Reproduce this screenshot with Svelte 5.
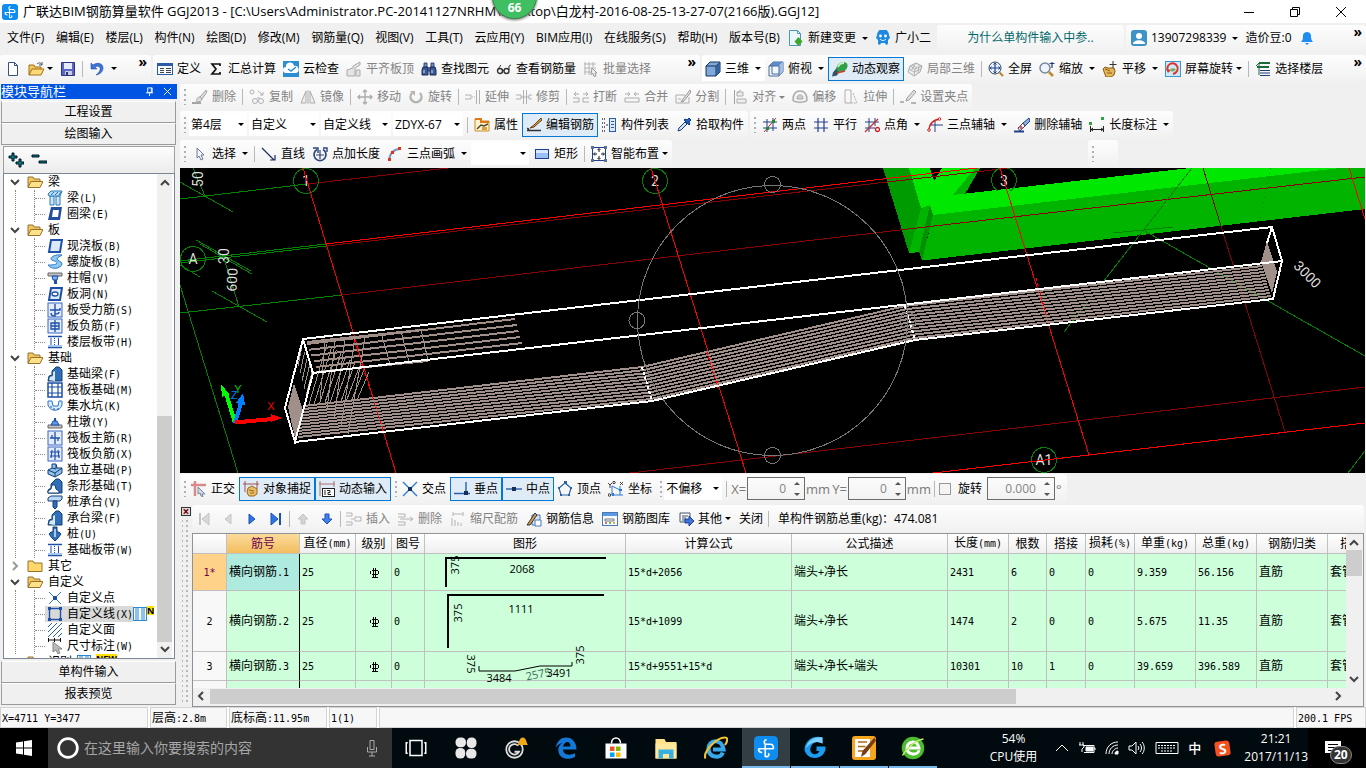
<script lang="ts">
  type Tool = {
    label?: string;
    icon?: string;
    off?: boolean;
    on?: boolean;
    caret?: '' | 'wide' | 'tight';
    kind?: 'tool' | 'sep' | 'grip' | 'combo' | 'view';
    size?: string;
  };

  const sep: Tool = { kind: 'sep' };
  const grip: Tool = { kind: 'grip' };

  const menus = ['文件(F)', '编辑(E)', '楼层(L)', '构件(N)', '绘图(D)', '修改(M)', '钢筋量(Q)', '视图(V)',
    '工具(T)', '云应用(Y)', 'BIM应用(I)', '在线服务(S)', '帮助(H)', '版本号(B)'];

  const fileTools: Tool[] = [
    { icon: 'new' },
    { icon: 'open', caret: 'tight' },
    { icon: 'save' },
    sep,
    { icon: 'undo', caret: 'wide' }
  ];

  const mainTools: Tool[] = [
    { icon: 'define', label: '定义' },
    { icon: 'sigma', label: '汇总计算' },
    { icon: 'cloud', label: '云检查' },
    { icon: 'level', label: '平齐板顶', off: true },
    { icon: 'binoculars', label: '查找图元' },
    { icon: 'glasses', label: '查看钢筋量' },
    { icon: 'batch', label: '批量选择', off: true }
  ];

  const viewTools: Tool[] = [
    { icon: 'cube', label: '三维', caret: 'wide', kind: 'view' },
    { icon: 'topview', label: '俯视', caret: 'wide' },
    { icon: 'orbit', label: '动态观察', on: true },
    { icon: 'part3d', label: '局部三维', off: true },
    sep,
    { icon: 'fullscreen', label: '全屏' },
    { icon: 'zoom', label: '缩放', caret: 'wide' },
    { icon: 'pan', label: '平移', caret: 'wide' },
    { icon: 'screenrot', label: '屏幕旋转', caret: 'tight' },
    sep,
    { icon: 'floors', label: '选择楼层' }
  ];

  const editTools: Tool[] = [
    grip,
    { icon: 'brush', label: '删除', off: true },
    sep,
    { icon: 'copy', label: '复制', off: true },
    { icon: 'mirror', label: '镜像', off: true },
    sep,
    { icon: 'move', label: '移动', off: true },
    { icon: 'rotate', label: '旋转', off: true },
    sep,
    { icon: 'extend', label: '延伸', off: true },
    { icon: 'trim', label: '修剪', off: true },
    sep,
    { icon: 'break', label: '打断', off: true },
    { icon: 'join', label: '合并', off: true },
    { icon: 'split', label: '分割', off: true },
    sep,
    { icon: 'align', label: '对齐', off: true, caret: 'tight' },
    { icon: 'offset', label: '偏移', off: true },
    { icon: 'stretch', label: '拉伸', off: true },
    sep,
    { icon: 'gripset', label: '设置夹点', off: true }
  ];

  const memberTools: Tool[] = [
    grip,
    { kind: 'combo', label: '第4层', size: 'short' },
    { kind: 'combo', label: '自定义' },
    { kind: 'combo', label: '自定义线' },
    { kind: 'combo', label: 'ZDYX-67' },
    sep,
    { icon: 'props', label: '属性' },
    { icon: 'editbar', label: '编辑钢筋', on: true },
    { icon: 'list', label: '构件列表' },
    { icon: 'pick', label: '拾取构件' }
  ];

  const axisTools: Tool[] = [
    grip,
    { icon: 'twopoint', label: '两点' },
    { icon: 'parallel', label: '平行' },
    { icon: 'angle', label: '点角', caret: 'wide' },
    { icon: 'threeaxis', label: '三点辅轴', caret: 'wide' },
    { icon: 'delaxis', label: '删除辅轴' },
    { icon: 'length', label: '长度标注', caret: 'wide' }
  ];

  const drawTools: Tool[] = [
    grip,
    { icon: 'pointer', label: '选择', caret: 'wide' },
    sep,
    { icon: 'line', label: '直线' },
    { icon: 'pointlen', label: '点加长度' },
    { icon: 'arc', label: '三点画弧', caret: 'wide' },
    { kind: 'combo', label: '', size: 'short' },
    { icon: 'rect', label: '矩形' },
    sep,
    { icon: 'smart', label: '智能布置', caret: 'tight' }
  ];

  const snapTools: Tool[] = [
    grip,
    { icon: 'ortho', label: '正交' },
    { icon: 'osnap', label: '对象捕捉', on: true },
    { icon: 'dyninput', label: '动态输入', on: true },
    grip,
    { icon: 'cross', label: '交点' },
    { icon: 'perp', label: '垂点', on: true },
    { icon: 'mid', label: '中点', on: true },
    { icon: 'vertex', label: '顶点' },
    { icon: 'coord', label: '坐标' },
    grip,
    { kind: 'combo', label: '不偏移', size: 'short' },
    sep
  ];

  const rebarTools: Tool[] = [
    { icon: 'first', off: true },
    { icon: 'prev', off: true },
    { icon: 'next' },
    { icon: 'last' },
    sep,
    { icon: 'up', off: true },
    { icon: 'down' },
    sep,
    { icon: 'insert', label: '插入', off: true },
    { icon: 'remove', label: '删除', off: true },
    { icon: 'scale', label: '缩尺配筋', off: true },
    { icon: 'info', label: '钢筋信息' },
    { icon: 'library', label: '钢筋图库' },
    { icon: 'other', label: '其他', caret: 'tight' },
    { label: '关闭' },
    sep
  ];

  const tree = [
    { label: '梁', open: true, items: [['beam', '梁(L)'], ['ring', '圈梁(E)']] },
    {
      label: '板', open: true, items: [['slab', '现浇板(B)'], ['spiral', '螺旋板(B)'], ['cap', '柱帽(V)'],
        ['hole', '板洞(N)'], ['force', '板受力筋(S)'], ['neg', '板负筋(F)'], ['strip', '楼层板带(H)']]
    },
    {
      label: '基础', open: true, items: [['fbeam', '基础梁(F)'], ['raft', '筏板基础(M)'], ['pit', '集水坑(K)'],
        ['pier', '柱墩(Y)'], ['raftmain', '筏板主筋(R)'], ['raftneg', '筏板负筋(X)'], ['isolated', '独立基础(P)'],
        ['stripf', '条形基础(T)'], ['pilecap', '桩承台(V)'], ['fbeam', '承台梁(F)'], ['pile', '桩(U)'], ['strip', '基础板带(W)']]
    },
    { label: '其它', open: false, items: [] },
    {
      label: '自定义', open: true, items: [['cpoint', '自定义点'], ['cline', '自定义线(X)'], ['cface', '自定义面'], ['dim', '尺寸标注(W)']]
    }
  ];

  const columns = ['', '筋号', '直径(mm)', '级别', '图号', '图形', '计算公式', '公式描述', '长度(mm)', '根数',
    '搭接', '损耗(%)', '单重(kg)', '总重(kg)', '钢筋归类', '搭接形式'];

  const rows = [
    { no: '1*', name: '横向钢筋.1', size: 'r1', formula: '15*d+2056', desc: '端头+净长', rest: ['2431', '6', '0', '0', '9.359', '56.156', '直筋', '套管挤压'] },
    { no: '2', name: '横向钢筋.2', size: 'r2', formula: '15*d+1099', desc: '端头+净长', rest: ['1474', '2', '0', '0', '5.675', '11.35', '直筋', '套管挤压'] },
    { no: '3', name: '横向钢筋.3', size: 'r3', formula: '15*d+9551+15*d', desc: '端头+净长+端头', rest: ['10301', '10', '1', '0', '39.659', '396.589', '直筋', '套管挤压'] }
  ];

  const status = ['X=4711 Y=3477', '层高:2.8m', '底标高:11.95m', '1(1)', '', '200.1 FPS'];

  const pinned = ['taskview', 'fan', 'gbell', 'edge', 'store', 'explorer', 'ie'];
  const running = ['ggj', 'gblue', 'note', 'green360'];

  // evenly spaced bars between a top edge and a bottom edge
  function bars(a: number[], b: number[], c: number[], d: number[], n: number) {
    return Array.from({ length: n }, (_, i) => {
      const t = i / (n - 1);
      return [a[0] + (c[0] - a[0]) * t, a[1] + (c[1] - a[1]) * t, b[0] + (d[0] - b[0]) * t, b[1] + (d[1] - b[1]) * t];
    });
  }

  const rebar = [
    ...bars([304, 406], [642, 367], [298, 437], [651, 399], 11),
    ...bars([642, 367], [905, 306], [651, 399], [914, 338], 11),
    ...bars([905, 306], [1262, 266], [914, 338], [1271, 296], 11),
    ...bars([307, 344], [515, 319], [316, 367], [522, 343], 5)
  ];
  const stirrups = [
    ...bars([327, 344], [309, 404], [369, 372], [357, 400], 10),
    ...bars([302, 346], [298, 366], [312, 372], [306, 396], 5),
    ...bars([325, 342], [320, 402], [365, 338], [348, 434], 5),
    ...bars([382, 336], [390, 364], [421, 330], [428, 360], 3)
  ];

  const blueBox = '<path d="M4 2h11l-2 12H2z" fill="#dce9fb" stroke="#1d4fa8" stroke-width="2"/>';
  const grid = '<rect x="1" y="1" width="14" height="14" fill="#e4ecfc" stroke="#3767c4"/>';

  const icons: Record<string, string> = {
    new: '<path d="M3.500 1.500h6l3 3v10h-9z" fill="#fff" stroke="#3a4f7c"/><path d="M9.500 1.500v3h3" fill="none" stroke="#3a4f7c"/>',
    open: '<path d="M1 14V4h5l1 2h6v3" fill="#f7c65b" stroke="#a0701a"/><path d="M1 14l3-6h12l-3 6z" fill="#ffd978" stroke="#a0701a"/><path d="M9 3c2-2 4-1 5 1M14 1v3h-3" fill="none" stroke="#456"/>',
    save: '<path d="M1.500 1.500h13v13h-13z" fill="#5a67c4" stroke="#2c3480"/><path d="M4 2h8v6H4z" fill="#e6ebff"/><path d="M5 10h7v4H5z" fill="#c9cde0"/><path d="M6 11h2v3H6z" fill="#2c3480"/>',
    undo: '<path d="M2 2v6h6L6 6c3-2 6 0 5 3-.5 2-2 3-4 5 5-1 7-4 7-7 0-5-6-6-10-3z" fill="#3f74d8" stroke="#2450a8" stroke-width=".6"/>',
    define: '<rect x=".5" y="2.500" width="15" height="11" fill="#f4f8ff" stroke="#2b5aa8"/><path d="M1 3h14v2H1z" fill="#2b5aa8"/><path d="M3 7.500h4M3 9.500h4M3 11.500h4M9 7.500h5M9 9.500h5M9 11.500h5" stroke="#444"/>',
    sigma: '<path d="M12 5V3H4l4 5-4 5h8v-2" fill="none" stroke="#111" stroke-width="1.700"/>',
    cloud: '<rect width="16" height="16" fill="#2b8ed0"/><path d="M3 12a3 3 0 0 1 0-6 4 4 0 0 1 8-1 3.500 3.500 0 0 1 2 7z" fill="#fff"/><path d="M5 8l3 2 5-4" fill="none" stroke="#2b8ed0" stroke-width="1.500"/>',
    level: '<path d="M1 15V9l6-2V5l7-4v3L9 7v8zM10 15V9h4v6z" fill="#e4e4e4" stroke="#aaa"/>',
    binoculars: '<path d="M2 6h5v8H1V9zM9 6h5l1 3v5H9z" fill="#3b5998" stroke="#1c2c55"/><path d="M3 2h3v4H3zM10 2h3v4h-3zM7 7h2v3H7z" fill="#6f8fc9" stroke="#1c2c55" stroke-width=".8"/><path d="M3 9v3M11 9v3" stroke="#cfe0ff"/>',
    glasses: '<circle cx="4" cy="10" r="2.500" fill="none" stroke="#333" stroke-width="1.400"/><circle cx="10.500" cy="10" r="2.500" fill="none" stroke="#333" stroke-width="1.400"/><path d="M2 8l3-4M13 9V5l2-1M6.500 9.500h1.500" fill="none" stroke="#333"/>',
    batch: '<path d="M1 3h12M1 7h12M1 11h7M2 1v13M6 1v13M10 1v5" stroke="#b4b4b4"/><path d="M9 7l5 5h-2l1 3-2 .5-1-3-2 1z" fill="#eee" stroke="#999"/>',
    cube: '<path d="M1 5l4-4h10v10l-4 4H1z" fill="#7ea9d8" stroke="#14305c"/><path d="M1 5h10v10M11 5l4-4" fill="none" stroke="#14305c"/><path d="M11 5l4-4v10l-4 4z" fill="#35619c"/>',
    topview: '<path d="M1 5l4-4h10v10l-4 4H1z" fill="#f2f7fd" stroke="#486a98"/><path d="M1 5l4-4h10l-4 4z" fill="#5e8cc8"/><path d="M11 5l4-4v10l-4 4z" fill="#9fbfe4"/><path d="M1 5h10v10M4 5v8h7" fill="none" stroke="#486a98"/>',
    orbit: '<path d="M0 15.500l5-1 3-5-3-3-4 5z" fill="#2f5668"/><ellipse cx="10" cy="6" rx="6" ry="4.500" transform="rotate(-35 10 6)" fill="#2fa047"/><path d="M6 6c1-3 4-4 6-4" fill="none" stroke="#c9f3c0" stroke-width="2"/><path d="M5 12l8-2" stroke="#d04030" stroke-width="1.500"/>',
    part3d: '<path d="M1 11l2-6 6-3 6 3-2 6-6 4z" fill="#ececec" stroke="#aaa"/><path d="M3 5l5 3 7-3M8 8l-1 7M5 4l5 3M9 2l-5 8M12 4l-1 8M2 8l5 3 7-3" fill="none" stroke="#aaa" stroke-width=".8"/>',
    fullscreen: '<circle cx="7" cy="7" r="6" fill="#eaf2ff" stroke="#345"/><path d="M11.500 11.500L15 15" stroke="#b3842c" stroke-width="2"/><path d="M7 2v10M2 7h10" stroke="#1a3f95" stroke-width="1.200"/><path d="M5.500 3.500L7 2l1.500 1.500M5.500 10.500L7 12l1.500-1.500M3.500 5.500L2 7l1.500 1.500M10.500 5.500L12 7l-1.500 1.500" fill="none" stroke="#1a3f95"/>',
    zoom: '<circle cx="6" cy="7" r="5" fill="#eef4fb" stroke="#7a8a98" stroke-width="1.500"/><path d="M10 11l4 4" stroke="#c08a30" stroke-width="2.500"/><path d="M13 1v6M10.500 2.500h5" stroke="#223a80" stroke-width="1.200"/>',
    pan: '<path d="M1 8l2-2 3 1 6 0 1 3-1 4-3 2H4z" fill="#e5b65a" stroke="#8a5a14"/><path d="M3 8l3 1M6 9l2 1M5 12h5" stroke="#8a5a14"/><path d="M11 0v7M7.500 3.500h7" stroke="#333"/>',
    screenrot: '<rect x=".5" y=".5" width="15" height="15" fill="#cdeaf8" stroke="#3c98c8"/><path d="M3 10a5 5 0 0 1 9-5c2 3 0 7-4 8" fill="none" stroke="#e03434" stroke-width="2"/><path d="M1 8l2 4 3-3z" fill="#e03434"/><path d="M5 8l4-1 2 2-4 2z" fill="#6fb45a"/>',
    floors: '<path d="M4 2h11M2 6h12" stroke="#1b6a3c" stroke-width="2"/><path d="M5 9.500h10M5 12h10M5 14.500h10" stroke="#223a80" stroke-width="1.200"/><path d="M1 5l3-3v12" fill="none" stroke="#1b6a3c"/>',
    brush: '<path d="M14 1L8 8l2 2 5-7zM8 8c-3 0-4 3-3 5 2 0 5-1 5-3z" fill="#ddd" stroke="#a4a4a4"/><path d="M0 14h9" stroke="#a4a4a4" stroke-width="2"/>',
    copy: '<circle cx="3" cy="3" r="2" fill="none" stroke="#b0b0b0"/><circle cx="6" cy="12" r="2.500" fill="none" stroke="#b0b0b0"/><circle cx="12" cy="12" r="2.500" fill="none" stroke="#b0b0b0"/><path d="M9 2l5 4M14 3v3h-3M8 9h3" fill="none" stroke="#b0b0b0"/>',
    mirror: '<path d="M6 2v12H1zM10 2v12h5z" fill="#eee" stroke="#acacac"/><path d="M8 1v14" stroke="#acacac"/>',
    move: '<path d="M8 1v14M1 8h14M6 3l2-2 2 2M6 13l2 2 2-2M3 6L1 8l2 2M13 6l2 2-2 2" fill="none" stroke="#acacac" stroke-width="1.400"/>',
    rotate: '<path d="M4 4a5.500 5.500 0 1 0 8 0" fill="none" stroke="#b4b4b4" stroke-width="2.500"/><path d="M2 2h5v5z" fill="#b4b4b4"/>',
    extend: '<path d="M0 6h6v4H0M11.500 1v14M14.500 1v14" fill="none" stroke="#b0b0b0"/><path d="M7 8h4" stroke="#b0b0b0" stroke-dasharray="1 1"/>',
    trim: '<path d="M0 6h5v4H0M16 6h-3v4h3M7.500 1v14M10.500 1v14M5 8h8" fill="none" stroke="#b0b0b0"/>',
    break: '<path d="M0 9h6v4H0M16 9h-6v4h6M1 5h5M10 5h5M3 3L1 5l2 2M13 3l2 2-2 2" fill="none" stroke="#acacac"/>',
    join: '<path d="M1 9h14v4H1zM1 5h5M10 5h5M4 3l2 2-2 2M12 3l-2 2 2 2" fill="none" stroke="#acacac"/>',
    split: '<path d="M1 6h9M1 14h13M1 6v8M14 8v6M3 10h3" fill="none" stroke="#acacac"/><path d="M15 1L8 10l-2 3 3-1 7-9z" fill="#ddd" stroke="#999"/>',
    align: '<path d="M2.500 1v14" stroke="#a0a0a0"/><path d="M5 3h6v4H5zM5 10h9v4H5z" fill="#eee" stroke="#acacac"/><path d="M9 1L5 4" stroke="#acacac"/>',
    offset: '<path d="M1 11c0-6 3-9 7-9s7 3 7 9c-1 3-13 3-14 0z" fill="#f2f2f2" stroke="#acacac" stroke-width="1.500"/><path d="M5 10c0-3 1-4 3-4s3 1 3 4z" fill="#ccc" stroke="#acacac"/>',
    stretch: '<path d="M2 1h6v13H2z" fill="none" stroke="#b0b0b0"/><path d="M10 4l4 10H8" fill="none" stroke="#b0b0b0" stroke-dasharray="2 1"/>',
    gripset: '<path d="M14 1L7 9l-1 3 3-1 7-8z" fill="#ddd" stroke="#a0a0a0"/><path d="M0 13h4M11 14h5" stroke="#a0a0a0" stroke-width="1.500"/>',
    props: '<path d="M1 2h6v2h8v10H1z" fill="#fff3cf" stroke="#c88a28"/><path d="M1 2h6v3h8" fill="none" stroke="#e07818" stroke-width="2"/><path d="M3 12l4-4 3 1 4-2" fill="none" stroke="#4a4a30" stroke-width="1.500"/><path d="M8 10h5v3H8z" fill="#d9a040"/>',
    editbar: '<path d="M1 11.500c2 0 3 2 0 2h14" fill="none" stroke="#333" stroke-width="1.300"/><path d="M15 1L8 8l-4 3 4-1 8-7z" fill="#d59a4a" stroke="#6a3c18"/>',
    list: '<path d="M1 2h3M1 6h3M1 10h3M1 14h3" stroke="#335" stroke-width="1.500" stroke-dasharray="1 1"/><rect x="8.500" y="1.500" width="6" height="13" fill="#dce8fb" stroke="#2b5aa8"/><path d="M10 4.500h3M10 7.500h3M10 10.500h3" stroke="#2b5aa8"/><path d="M5 8h2" stroke="#335"/>',
    pick: '<path d="M2 14l1-3 6-6 2 2-6 6z" fill="#cfe1f8" stroke="#1d3c78"/><path d="M8 3l5 5 1-1-1-2 2-2-2-2-2 2-2-1z" fill="#1d62c8" stroke="#12357c"/>',
    twopoint: '<path d="M5 2v13M11 1v13M1 5h14M1 11h14" stroke="#24408c"/><path d="M2 15L14 1" stroke="#c03030"/><path d="M4 10h3v3H4zM10 3h3v3h-3z" fill="#228a22"/>',
    parallel: '<path d="M5 1v14M11 1v14M1 5h14M1 11h14" stroke="#24408c" stroke-width="1.200"/>',
    angle: '<path d="M5 1v14M11 1v8M1 5h14M1 11h10" stroke="#24408c"/><path d="M1 15L14 2" stroke="#c03030" stroke-width="1.300"/><circle cx="13.500" cy="12.500" r="2" fill="none" stroke="#d02020" stroke-width="1.300"/>',
    threeaxis: '<path d="M8 4v11M4 8h12" stroke="#24408c"/><path d="M2 14C2 7 5 3 13 2" fill="none" stroke="#d02020" stroke-width="1.300"/><circle cx="2" cy="13" r="1.300" fill="#fff" stroke="#d02020"/><circle cx="12.500" cy="2" r="1.300" fill="#fff" stroke="#d02020"/>',
    delaxis: '<path d="M15 1L9 6l2 3 5-5z" fill="#88b0e0" stroke="#24408c"/><path d="M9 6l-5 5 2 3 5-5z" fill="#fff" stroke="#444"/><path d="M5 10l2 3 2-2-2-3z" fill="#c25a7a"/><path d="M0 14.500h10" stroke="#24408c" stroke-width="2"/>',
    length: '<path d="M1.500 9v6M14.500 9v6M2 12.500h12M4 11l-2 1.500L4 14M12 11l2 1.500-2 1.500" fill="none" stroke="#222"/><path d="M0 5h3v3H0zM12 0h3v3h-3z" fill="#30a040"/>',
    pointer: '<path d="M5 2v10l2-2 2 4 2-1-2-4h3z" fill="#f4f6fa" stroke="#6a7a94"/>',
    line: '<path d="M1 2l12 12M14 9v5H9" fill="none" stroke="#1c2c5c" stroke-width="1.200"/>',
    pointlen: '<path d="M5 3.500A6 6 0 1 0 11 3.500" fill="none" stroke="#2a4478" stroke-width="1.700"/><path d="M8 4v9M4 9h8" stroke="#2a4478" stroke-width="1.200"/><path d="M1 2h5v5M15 6V2h-4" fill="none" stroke="#2a4478" stroke-width="1.400"/>',
    arc: '<path d="M2 14C3 8 6 3 13 3" fill="none" stroke="#7c94c0" stroke-width="2"/><path d="M1 12h3v3H1zM4 5h3v3H4zM11 1h3v3h-3z" fill="#d83820"/>',
    rect: '<rect x="1.500" y="3.500" width="13" height="9" fill="#9dc0fa" stroke="#1a3f95"/><path d="M2 4h12v3H2z" fill="#dae8ff"/>',
    smart: '<rect x="1.500" y="1.500" width="13" height="13" fill="#fff" stroke="#1a3f95"/><path d="M8 3v3M8 10v3M3 8h3M10 8h3M6.500 4L8 2.500 9.500 4M6.500 12L8 13.500 9.500 12M4 6.500L2.500 8 4 9.500M12 6.500L13.500 8 12 9.500" fill="none" stroke="#111"/><path d="M0 0h3v3H0zM13 0h3v3h-3zM0 13h3v3H0zM13 13h3v3h-3z" fill="#607090"/>',
    ortho: '<path d="M4 0v15M0 4h15" stroke="#d88a8a" stroke-width="2.500"/><path d="M7 6l7 7-3 0 1 3-2-1-1-3-2 1z" fill="#cfd8e6" stroke="#7a8aa4"/>',
    osnap: '<path d="M2 0v11M14 0v8M0 3h16" stroke="#a05050"/><path d="M5 7l4-2 5 3v5l-3 2H6l-2-3z" fill="#e8bd68" stroke="#9a6a20"/><path d="M6 9l5 1M7 12h4" stroke="#9a6a20"/>',
    dyninput: '<path d="M0 3h16M1 0v15M15 0v6" stroke="#b07070"/><rect x="3.500" y="7.500" width="12" height="8" fill="#fff" stroke="#222"/><path d="M6 9v5M8 9.500h3v2H9v2h3" fill="none" stroke="#222"/>',
    cross: '<path d="M1 1l14 14M15 1L1 15" stroke="#2a78d0" stroke-width="1.300"/><path d="M6 6h4v4H6z" fill="#14305c"/>',
    perp: '<path d="M12 1v11M0 12.500h16" stroke="#2a60a8" stroke-width="1.400"/><path d="M10 10h4v4h-4z" fill="#14305c"/>',
    mid: '<path d="M0 8h16" stroke="#2a60a8" stroke-width="1.400"/><path d="M6 6h4v4H6z" fill="#14305c"/>',
    vertex: '<path d="M8 2l6 5-2 7H4L2 7z" fill="none" stroke="#2a60a8" stroke-width="1.200"/><path d="M7 0h3v3H7zM13 6h2v2h-2zM1 6h2v2H1zM3 13h2v2H3zM11 13h2v2h-2z" fill="#2a60a8"/>',
    coord: '<path d="M4 5v9h11M4 5l8 4M12 5v9" fill="none" stroke="#2a78d0"/><path d="M0 2l2 2 2-2M2 4v3M12 1l3 3M15 1l-3 3" fill="none" stroke="#333" stroke-width=".9"/><circle cx="1.500" cy="14" r="1.300" fill="none" stroke="#333"/><circle cx="6" cy="1.500" r="1.200" fill="none" stroke="#333"/><path d="M4 12h2v3H4zM11 8h3v2h-3z" fill="#2a78d0"/>',
    first: '<path d="M4 2v12" stroke="#c4c4c4" stroke-width="2"/><path d="M13 2v12L6 8z" fill="#d8d8d8" stroke="#c4c4c4"/>',
    prev: '<path d="M11 3v10L5 8z" fill="#d8d8d8" stroke="#c4c4c4"/>',
    next: '<path d="M5 3v10l6-5z" fill="#2f74e4" stroke="#1c50b8"/>',
    last: '<path d="M3 2v12l7-6z" fill="#2f74e4" stroke="#1c50b8"/><path d="M12 2v12" stroke="#1c50b8" stroke-width="2"/>',
    up: '<path d="M8 3l5 5h-3v5H6V8H3z" fill="#d4d4d4" stroke="#c4c4c4"/>',
    down: '<path d="M8 13l5-5h-3V3H6v5H3z" fill="#3f80ea" stroke="#1c50b8"/>',
    insert: '<path d="M0 2h6v3H0M0 11h6v3H0M9 6h6v4H9zM5 8h3" fill="none" stroke="#b4b4b4"/>',
    remove: '<path d="M0 3h7v3H0M0 11h7v3H0M2 8h12M12 6l3 2-3 2" fill="none" stroke="#b4b4b4"/>',
    scale: '<path d="M3 1v4M13 1v4M3 3h10M2 7v8M5 9v6M8 11v4M11 12v3" fill="none" stroke="#b4b4b4"/>',
    info: '<path d="M6 4h8v10H6z" fill="#d8e6fa" stroke="#4a78b8"/><path d="M1 14h3L11 4 9 2z" fill="#d0a050" stroke="#333"/><path d="M9 9h6v6H9z" fill="#fff" stroke="#4a78b8"/>',
    library: '<rect x=".5" y="1.500" width="15" height="13" fill="#f7faff" stroke="#4a78b8"/><path d="M1 3.500h14" stroke="#5a98e0" stroke-width="3"/><path d="M3 8h9v2H3z" fill="none" stroke="#555" stroke-width=".8"/><path d="M3 12h2" stroke="#d33" stroke-width="1.500"/><path d="M7 12h2" stroke="#3a3" stroke-width="1.500"/><path d="M11 12h2" stroke="#e90" stroke-width="1.500"/>',
    other: '<path d="M2 2h10v5M2 2v9h5M4 5h6M4 7h4M4 9h3" fill="none" stroke="#456"/><path d="M7 8h4V5l5 5-5 5v-3H7z" fill="#3f74d8" stroke="#1c3f98"/>',
    newdoc: '<path d="M1.500 .5h8l3 3v12h-11z" fill="#eaf6fb" stroke="#4a98b8"/><path d="M9.500 .5v3h3" fill="none" stroke="#4a98b8"/><path d="M10.500 7l4 4.500-4 4.500-4-4.500z" fill="#3aa82a"/>',
    mascot: '<path d="M2 5a6 6 0 0 1 12 0l1 3-2 2v4l-2 1-1-2H6l-1 2-2-1v-4L1 8z" fill="#1d8ae0"/><circle cx="5.500" cy="6" r="1.400" fill="#fff"/><circle cx="10.500" cy="6" r="1.400" fill="#fff"/><path d="M5 9c2 2 4 2 6 0" fill="none" stroke="#fff"/>',
    user: '<rect width="16" height="16" rx="3" fill="#3d92c8"/><circle cx="8" cy="6" r="3" fill="#fff"/><path d="M2 14c0-5 12-5 12 0z" fill="#fff"/>',
    bell: '<path d="M2 12c2-2 2-4 2-7 1-4 7-4 8 0 0 3 0 5 2 7z" fill="#1e8cf0"/><path d="M6 13h4l-2 2z" fill="#1e8cf0"/>',
    // navigation tree
    folderopen: '<path d="M1 13V3h5l1 2h6v3" fill="#f1c75c" stroke="#93722c"/><path d="M1 13.500l3-6h12l-3 6z" fill="#ffe08a" stroke="#93722c"/>',
    folder: '<path d="M1 13.500V3h5l1 2h8v8.500z" fill="#ffd76a" stroke="#93722c"/>',
    beam: '<path d="M3 6h4v9H3zM9 6h4v9H9z" fill="#cfe6fa" stroke="#2a78b8"/><path d="M1 4l3-3h11l-2 5H2z" fill="#b4dcf8" stroke="#2a78b8"/><path d="M4 5l3-3M8 5l3-3M12 5l2-3" stroke="#2a78b8"/>',
    ring: '<path d="M4 1h11l-2 13H1z" fill="#244f9e"/><path d="M6 4h6l-1 7H5z" fill="#fff"/>',
    slab: blueBox,
    spiral: '<path d="M15 1C8 0 4 3 4 5s7 2 6 4-6 2-9 2c3 5 13 4 14-1 0-3-5-3-5-5s3-2 5-4z" fill="#8cc8f4" stroke="#2a78c8"/>',
    cap: '<path d="M1 3h14v3H1z" fill="#c4c4c4" stroke="#666"/><path d="M5 6h6l-1 4H6z" fill="#7ab0f0" stroke="#1d4fa8"/><path d="M7 10h3v4H7z" fill="#1d4fa8"/>',
    hole: blueBox + '<ellipse cx="8" cy="8" rx="3" ry="2" fill="#fff" stroke="#1d4fa8" stroke-width="1.300"/>',
    force: grid + '<path d="M8 2v12c-3 0-4-1-4-3M3 8h10V6M8 12c3 0 4-1 4-2" fill="none" stroke="#1d4fa8" stroke-width="1.400"/>',
    neg: grid + '<path d="M8 2v12M4 5v6h8V5zM4 8h8" fill="none" stroke="#1d4fa8" stroke-width="1.300"/>',
    strip: '<path d="M1 2.500h14M1 13.500h14" stroke="#1d4fa8" stroke-width="1.500"/><path d="M4 4v9M11.500 4v9" stroke="#1d4fa8"/><path d="M1 11h14v2H1z" fill="#a8c6f4"/><path d="M7.500 4v8" stroke="#1d4fa8" stroke-dasharray="1 1"/>',
    fbeam: '<path d="M1 15l1-5 3-1V5l4-4h3l3 3v11z" fill="#2e6fb8" stroke="#123f78"/><path d="M2 14l1-3 3-1V6l2-1v10z" fill="#d8eafa"/>',
    raft: '<rect x="1" y="1" width="14" height="14" fill="#fff" stroke="#1d4fa8" stroke-width="1.500"/><path d="M1 5h14M1 11h14M5 1v14M11 1v14" stroke="#1d4fa8" stroke-width="1.200"/>',
    pit: '<path d="M1 3h4l1 5h5l1-5h3v4c-2 7-12 7-14 0z" fill="#dcebfb" stroke="#2a78c8"/><path d="M3 9h2M6 11h2M10 11h2" stroke="#1d4fa8"/>',
    pier: '<path d="M1 11h14v3H1z" fill="#c4c4c4" stroke="#666"/><path d="M4 11l2-4h4l2 4z" fill="#5a9ae8" stroke="#1d4fa8"/><path d="M7 4h2v3H7z" fill="#1d4fa8"/>',
    raftmain: grid + '<path d="M8 2v12M3 8h10M5 8V5M11 8v3" fill="none" stroke="#1d4fa8" stroke-width="1.300"/>',
    raftneg: grid + '<path d="M8 2v12M3 6h10M3 10h10M5 4l-1 8M11 4l1 8" fill="none" stroke="#1d4fa8" stroke-width="1.200"/>',
    isolated: '<path d="M1 8l4-2V2h4l1 4h5v5l-7 4-7-3z" fill="#8fbfea" stroke="#123f78"/><path d="M1 8l7 3 7-5M8 11v4M5 6l4 1V3" fill="none" stroke="#123f78"/>',
    stripf: '<path d="M1 15v-3l3-2V6l5-5h3l3 3v11z" fill="#2e6fb8" stroke="#123f78"/><path d="M1 15v-2l3-2 1-4h3l1 4 3 2v2z" fill="#fff" stroke="#123f78"/>',
    pilecap: '<path d="M1 4l3-2h11v3l-2 2H1z" fill="#bcd8f4" stroke="#123f78"/><path d="M6 7h4v6l-2 2-2-2z" fill="#2e6fb8" stroke="#123f78"/>',
    pile: '<path d="M6 1h4v5h2l2 2-3 4-3 3-3-3-3-4 2-2h2z" fill="#2e6fb8" stroke="#123f78"/><path d="M8 3v8" stroke="#cfe4fa" stroke-width="1.500"/>',
    cpoint: '<path d="M2 2l12 12M14 2L2 14" stroke="#2a78d0"/><path d="M6 6h4v4H6z" fill="#1d4fa8"/>',
    cline: '<rect x="2.500" y="2.500" width="11" height="11" fill="none" stroke="#1d4fa8" stroke-width="1.400"/><path d="M1 1h3v3H1zM12 1h3v3h-3zM1 12h3v3H1zM12 12h3v3h-3z" fill="#1d4fa8"/>',
    cface: '<path d="M1 5l4-4M1 10l9-9M1 15L15 1M6 15l9-9M11 15l4-4" stroke="#2a60b8"/>',
    dim: '<path d="M1.500 0v4M13.500 0v4M2 2h11M7.500 0v4" stroke="#111"/><path d="M6 4v10l3-2 2 4 2-1-2-4h4z" fill="#bbb" stroke="#888"/>',
    // taskbar
    taskview: '<path d="M4 3h8v10H4z" fill="none" stroke="#fff"/><path d="M2.500 4.500h-1v7h1M13.500 4.500h1v7h-1" fill="none" stroke="#fff"/>',
    fan: '<g fill="#e8e8e8"><rect x="1" y="1" width="7" height="6.500" rx="3"/><rect x="8.500" y="1" width="6.500" height="7" rx="3"/><rect x="8" y="8.500" width="7" height="6.500" rx="3"/><rect x="1" y="8" width="6.500" height="7" rx="3"/></g>',
    gbell: '<circle cx="7" cy="9" r="5.500" fill="none" stroke="#ddd" stroke-width="1.200"/><path d="M9.500 6.500a3.500 3.500 0 1 0 .5 4H7" fill="none" stroke="#ddd" stroke-width="1.200"/><path d="M9 6c1-1 1-5 3.500-5S15 5 16 6z" fill="#f0a818"/>',
    edge: '<path d="M1 8C2 3 5 1 8 1c4 0 7 3 7 8H6c0 4 5 4 8 2.500V14c-6 3-12 0-11-6 .5-2 2-3 3-3.500C4 5 2 6 1 8zm5-1h5c0-4-4-4-5 0z" fill="#1478d8"/>',
    store: '<path d="M1 5h14v10H1z" fill="#fff"/><path d="M5 5c0-5 6-5 6 0" fill="none" stroke="#fff"/><path d="M4 7h3v3H4z" fill="#f25022"/><path d="M8 7h3v3H8z" fill="#7fba00"/><path d="M4 11h3v3H4z" fill="#00a4ef"/><path d="M8 11h3v3H8z" fill="#ffb900"/>',
    explorer: '<path d="M1 2h6l1 2h7v11H1z" fill="#ffe08a"/><path d="M1 5h14v10H1z" fill="#ffe79c"/><path d="M3 9h10v6h-3v-3H6v3H3z" fill="#39aee0"/>',
    ie: '<path d="M12.500 11c-1 4-9.500 4-9.500-2.500s9-7 10 .5H6" fill="none" stroke="#39a8ea" stroke-width="2.800"/><path d="M1 15C-1 11 8 1 14 1c2 0 2 2 0 5" fill="none" stroke="#f2c32c" stroke-width="1.400"/>',
    ggj: '<rect width="16" height="16" rx="3" fill="#0d8df0"/><path d="M8.500 2.500c-2 0-2 2-1 3v8c2 1 3-1 2-2M3 8.500h10M3 8.500c0 2 1 2.500 2.500 2.500M7.500 5.500H11c1.500 0 2 1 2 3" fill="none" stroke="#fff" stroke-width="1.100"/>',
    gblue: '<path d="M13 1C6-1 1 4 1 9c1 7 12 8 14 0V7H9v3h2c-2 4-7 2-6-2s5-5 8-3z" fill="#1b9cf0"/><path d="M13 1C8 0 3 3 2 8c3-4 7-5 11-3z" fill="#7fd0ff"/>',
    note: '<rect width="16" height="16" rx="2" fill="#f5a61c"/><path d="M2 2h10v12H2z" fill="#fff"/><path d="M4 4h6M4 7h5M4 10h4" stroke="#b06a10"/><path d="M15 1L7 10l-1 4 3-2 7-9z" fill="#7a3c10"/>',
    green360: '<circle cx="8" cy="8" r="7.500" fill="#4dbb2e"/><path d="M12 9.500c-1 4-8 3-8-1.500s7-6 8 0H5" fill="none" stroke="#fff" stroke-width="2"/><path d="M1 13C3 9 9 3 15 2" fill="none" stroke="#b8ef6a"/>'
  };

  let selected = $state('cline');
  let query = $state('');
  let rotateOn = $state(false);
</script>

{#snippet icon(name: string)}
  <svg class="icon" viewBox="0 0 16 16" aria-hidden="true">{@html icons[name]}</svg>
{/snippet}

<!-- CJK at full size, ASCII runs in a half-width face -->
{#snippet mixed(text: string)}
  {#each text.split(/([\x20-\x7e]+)/) as run, i}{#if i % 2}<span class="half">{run}</span>{:else}{run}{/if}{/each}
{/snippet}

{#snippet tools(items: Tool[])}
  {#each items as t}
    {#if t.kind === 'sep'}
      <span class="sep"></span>
    {:else if t.kind === 'grip'}
      <span class="grip"></span>
    {:else if t.kind === 'combo'}
      <span class="combo {t.size ?? ''}">
        <select aria-label={t.label || '参数'}><option>{t.label}</option></select>
      </span>
    {:else}
      <button class="tool" class:on={t.on} class:view={t.kind === 'view'} disabled={t.off} aria-label={t.label ?? t.icon}>
        {#if t.icon}{@render icon(t.icon)}{/if}
        {#if t.label}<span>{t.label}</span>{/if}
        {#if t.caret}<i class="caret {t.caret}"></i>{/if}
      </button>
    {/if}
  {/each}
{/snippet}

{#snippet spin(id: string, value: string)}
  <span class="spin" class:wide={id === 'rot'}>
    <input {id} type="text" {value} disabled aria-label={id} />
    <span class="steps"><i class="caret flip"></i><i class="caret"></i></span>
  </span>
{/snippet}

{#snippet chevron(dir: string)}
  <svg class="chev {dir}" viewBox="0 0 10 10" aria-hidden="true"><path d="M1 7l4-4 4 4" /></svg>
{/snippet}

<div class="app">
  <header class="titlebar">
    {@render icon('ggj')}
    <h1>广联达BIM钢筋算量软件 GGJ2013 - [C:\Users\Administrator.PC-20141127NRHM\Desktop\白龙村-2016-08-25-13-27-07(2166版).GGJ12]</h1>
    <span class="speed">66</span>
    <div class="window">
      <button aria-label="最小化"><svg viewBox="0 0 12 12"><path d="M1 6.500h10" /></svg></button>
      <button aria-label="还原"><svg viewBox="0 0 12 12"><path d="M1.500 3.500h7v7h-7zM3.500 3V1.500h7v7H9" /></svg></button>
      <button aria-label="关闭窗口"><svg viewBox="0 0 12 12"><path d="M1 1l10 10M11 1L1 11" /></svg></button>
    </div>
  </header>

  <nav class="menubar">
    <div class="menus">
      <div class="menulist">
        {#each menus as m}<button class="menu">{m}</button>{/each}
      </div>
      {@render tools([{ icon: 'newdoc', label: '新建变更', caret: 'wide' }, { icon: 'mascot', label: '广小二' }])}
    </div>
    <div class="band hint"><a href="#faq">为什么单构件输入中参..</a></div>
    <div class="band account">
      {@render tools([{ icon: 'user', label: '13907298339', caret: 'wide' }, { label: '造价豆:0' }, { icon: 'bell' }])}
      <button class="more" aria-label="更多">»</button>
    </div>
  </nav>

  <div class="toprow">
    <div class="band file">
      {@render tools(fileTools)}
      <button class="more" aria-label="更多">»</button>
    </div>
    <div class="band main">
      {@render tools(mainTools)}
      <button class="more" aria-label="更多">»</button>
    </div>
    <div class="band rest">
      {@render tools(viewTools)}
      <button class="more" aria-label="更多">»</button>
    </div>
  </div>

  <div class="work">
    <aside class="side">
      <div class="side-title">
        <h2>模块导航栏</h2>
        <button aria-label="固定"><svg viewBox="0 0 10 10"><path d="M3 1h5v5H3zM7 1v5M1 6.500h8M5 7v3" /></svg></button>
        <button aria-label="关闭导航"><svg viewBox="0 0 10 10"><path d="M1 1l8 8M9 1L1 9" /></svg></button>
      </div>
      <button class="tab">工程设置</button>
      <button class="tab">绘图输入</button>
      <div class="tree-tools">
        <button aria-label="全部展开"><svg viewBox="0 0 16 16"><path d="M4 1h2v3h3v2H6v3H4V6H1V4h3zM11 7h2v3h3v2h-3v3h-2v-3H8v-2h3z" /></svg></button>
        <button aria-label="全部折叠"><svg viewBox="0 0 16 16"><path d="M1 3h7v2H1zM8 9h8v2H8z" /></svg></button>
      </div>
      <div class="tree-box">
        <ul class="tree">
          {#each tree as group}
            <li>
              <div class="group">
                {@render chevron(group.open ? 'down' : 'right')}
                {@render icon(group.open ? 'folderopen' : 'folder')}
                <span>{group.label}</span>
              </div>
              {#if group.items.length}
                <ul class="leaves">
                  {#each group.items as [ic, label]}
                    <li>
                      <button class="leaf" class:current={selected === ic} onclick={() => (selected = ic)}>
                        {@render icon(ic)}<span>{@render mixed(label)}</span>
                      </button>
                      {#if ic === 'cline'}<span class="pages"></span><b class="new">N</b>{/if}
                    </li>
                  {/each}
                </ul>
              {/if}
            </li>
          {/each}
          <li>
            <div class="group last">
              {@render icon('folder')}<span>识别</span><span class="pages"></span><b class="new">NEW</b>
            </div>
          </li>
        </ul>
        <div class="vbar">
          {@render chevron('up')}
          <div class="track"><div class="thumb"></div></div>
          {@render chevron('down')}
        </div>
      </div>
      <button class="tab">单构件输入</button>
      <button class="tab">报表预览</button>
    </aside>

    <main class="stage">
      <div class="row edit"><div class="band">{@render tools(editTools)}</div></div>
      <div class="row">
        <div class="band">{@render tools(memberTools)}</div>
        <div class="band">{@render tools(axisTools)}</div>
      </div>
      <div class="row">
        <div class="band">{@render tools(drawTools)}</div>
        <div class="band stub">{@render tools([grip])}</div>
      </div>

      <svg class="scene" viewBox="180 168 1185 305" preserveAspectRatio="xMinYMin slice" role="img" aria-label="三维视图">
        <rect x="180" y="168" width="1185" height="305" fill="#000" />
        <!-- solid members -->
        <path d="M883 168h26l12 40-12 45z" fill="#009b00" />
        <path d="M921 208l9-3-10 47-11 1z" fill="#00b400" />
        <path d="M930 205l3 10-11 45-3-8z" fill="#009000" />
        <path d="M909 168h21l4 13 8-13h33l-35 43-7 4-3-10-9 3z" fill="#00e800" />
        <path d="M966 168h14l-15 26-12 1-13 16z" fill="#00b400" />
        <path d="M966 168h9l-35 43-7 4-3-10z" fill="#00e800" />
        <path d="M933 215l20-20 237-27h150z" fill="#00e800" />
        <path d="M933 215l407-47h25v41L922 260.500z" fill="#00b400" />
        <!-- axis grid -->
        <g class="ax dark">
          <path d="M307 184L448 168M326 246L1010 168M342 295L960 223 1365 177M630 473L1000 430 1365 387M1203 168L1285 432" />
        </g>
        <g class="ax green">
          <path d="M180 199L307 184M180 182L233 212M205 196L193 168M180 261L326 244M180 263L326 246M196 240L251 271M200 244L252 274M180 313L342 295M212 291L267 322M223 255L239 307M180 285L238 473M180 265L200 277" />
          <path d="M1192 168L1064 332M1143 230L1365 356M1113 233L1173 227M1348 473L1365 451" />
          <path d="M1271 168L1260 218" stroke-dasharray="1 4" />
          <circle cx="193" cy="259" r="12.500" /><circle cx="306" cy="181" r="12.500" /><circle cx="655" cy="181" r="12.500" />
          <path d="M998 191a12.500 12.500 0 1 1 12 0" /><circle cx="1044" cy="460" r="12.500" />
        </g>
        <g class="cad">
          <text x="193" y="264">A</text><text x="306" y="186">1</text><text x="655" y="186">2</text>
          <text x="1004" y="186">3</text><text x="1044" y="465">A1</text>
          <text transform="translate(203 179) rotate(-90)">50</text>
          <text transform="translate(229 256) rotate(-90)">30</text>
          <text transform="translate(237 280) rotate(-88)">600</text>
          <text transform="translate(1304 278) rotate(45)">3000</text>
        </g>
        <g class="ax red">
          <path d="M303 168L396 473M651 168L746 473M1000 168L1089 455M1349 168L1365 219M326 244L977 168M933 473L1365 423" />
        </g>
        <!-- reinforcement -->
        <path d="M294 383l-6 24 7 31 8-28zM1267 241l-6 21 11 31 5-21z" fill="#a09089" />
        <g class="bars">
          {#each rebar as [x1, y1, x2, y2]}<line {x1} {y1} {x2} {y2} />{/each}
          <path d="M307 342L420 330M316 372L428 361" />
        </g>
        <g class="ties">
          {#each stirrups as [x1, y1, x2, y2]}<line {x1} {y1} {x2} {y2} />{/each}
        </g>
        <g class="ax red"><path d="M354 340L384 432M1036 278L1047 318M707 352L718 388" stroke-dasharray="3 2" /></g>
        <g class="outline">
          <path d="M303 339L1272 227 1282 261 313 373zM303 339L285 408 295 442 313 373M295 442L652 401 915 340 1273 299 1282 261M1272 227L1267 243" />
          <path d="M642 367L652 401M905 306L915 340" stroke-dasharray="3 2" />
        </g>
        <!-- orbit ring -->
        <g class="orbit">
          <circle cx="772.500" cy="320.500" r="135" /><circle cx="772.500" cy="184.500" r="8" /><circle cx="772.500" cy="455.500" r="8" />
          <circle cx="637" cy="320.500" r="8" /><circle cx="908" cy="320.500" r="8" />
        </g>
        <!-- coordinate tripod -->
        <g class="tripod">
          <path d="M235 423L226 393" stroke="#0f0" /><path d="M221 384l8 10-7 3z" fill="#0f0" />
          <path d="M235 423L241 403" stroke="#0080ff" /><path d="M243 393l2 12-9-2z" fill="#0080ff" />
          <path d="M235 422.500L272 419" stroke="#f00" /><path d="M282 418l-11-4v8z" fill="#f00" />
          <text x="238" y="393" fill="#0c0">Y</text><text x="234" y="399" fill="#0080ff">Z</text><text x="271" y="410" fill="#f00">X</text>
        </g>
      </svg>

      <div class="row snap">
        <div class="band">
          {@render tools(snapTools)}
          <label for="offx">X=</label>{@render spin('offx', '0')}<span class="unit">mm</span>
          <label for="offy">Y=</label>{@render spin('offy', '0')}<span class="unit">mm</span>
          <span class="sep"></span>
          <label class="check"><input type="checkbox" bind:checked={rotateOn} />旋转</label>
          {@render spin('rot', '0.000')}<span class="unit">°</span>
        </div>
      </div>

      <section class="panel">
        <div class="dock"><button aria-label="关闭面板">×</button></div>
        <div class="panel-body">
          <div class="band rebar-tools">
            {@render tools(rebarTools)}
            <span class="total">单构件钢筋总重(kg)：474.081</span>
          </div>
          <div class="gridbox">
            <div class="viewport">
              <table>
                <colgroup>{#each columns as _, i}<col class="c{i}" />{/each}</colgroup>
                <thead>
                  <tr>{#each columns as c, i}<th class:active={i === 1}>{@render mixed(c)}</th>{/each}</tr>
                </thead>
                <tbody>
                  {#each rows as r, n}
                    <tr class={r.size}>
                      <th class:active={n === 0}>{@render mixed(r.no)}</th>
                      <td class="name" class:active={n === 0}>{@render mixed(r.name)}</td>
                      <td>{@render mixed('25')}</td>
                      <td class="mid">
                        <svg class="grade" viewBox="0 0 10 10" role="img" aria-label="HRB400"><path d="M2 2.500h6M2 6.500h6M.5 3v3M8.500 3v3M3.500 0v9M5.500 0v9M2 9.500h6" /></svg>
                      </td>
                      <td>{@render mixed('0')}</td>
                      <td class="shape">
                        {#if n === 0}
                          <svg viewBox="0 0 200 36"><path class="thick" d="M21 33V4H181" /><text transform="translate(34 11) rotate(-90)">375</text><text x="97" y="19">2068</text></svg>
                        {:else if n === 1}
                          <svg viewBox="0 0 200 60"><path class="thick" d="M23 57V4H179" /><text transform="translate(37 22) rotate(-90)">375</text><text x="96" y="22">1111</text></svg>
                        {:else}
                          <svg viewBox="0 0 200 28"><path d="M54 14v5h36l25-5h32v-4" /><text transform="translate(42 12) rotate(90)">375</text><text x="74" y="30">3484</text><text class="slope" transform="translate(114 26) rotate(-12)">2575</text><text x="134" y="25">3491</text><text transform="translate(159 3) rotate(-90)">375</text></svg>
                        {/if}
                      </td>
                      <td>{@render mixed(r.formula)}</td>
                      <td>{@render mixed(r.desc)}</td>
                      {#each r.rest as v}<td>{@render mixed(v)}</td>{/each}
                    </tr>
                  {/each}
                  <tr class="r4"><th></th>{#each columns.slice(1) as _, i}<td class:name={i === 0}></td>{/each}</tr>
                </tbody>
              </table>
            </div>
            <div class="vbar grid-v">
              {@render chevron('up')}
              <div class="track"><div class="thumb"></div></div>
              {@render chevron('down')}
            </div>
            <div class="hbar">
              {@render chevron('left')}
              <div class="track"><div class="thumb"></div></div>
              {@render chevron('right')}
            </div>
          </div>
        </div>
      </section>
    </main>
  </div>

  <footer class="status">
    {#each status as s, i}<span class="s{i}">{@render mixed(s)}</span>{/each}
  </footer>

  <div class="taskbar">
    <button class="start" aria-label="开始"><svg viewBox="0 0 16 16"><path d="M0 2.500l7-1v6H0zM8 1.300L16 0v7.500H8zM0 8.500h7v6l-7-1zM8 8.500h8V16l-8-1.300z" /></svg></button>
    <label class="search">
      <svg class="cortana" viewBox="0 0 20 20"><circle cx="10" cy="10" r="8.500" /></svg>
      <input type="text" placeholder="在这里输入你要搜索的内容" bind:value={query} aria-label="搜索" />
      <svg class="mic" viewBox="0 0 12 18"><path d="M4 1.500h4v9H4zM1.500 8v5h9V8M6 13v4M3 17h6" /></svg>
    </label>
    <div class="apps pinned">{#each pinned as a}<button aria-label={a}>{@render icon(a)}</button>{/each}</div>
    <div class="apps running">{#each running as a, i}<button class:active={i === 0} aria-label={a}>{@render icon(a)}</button>{/each}</div>
    <div class="cpu"><span>54%</span><span>CPU使用</span></div>
    <div class="tray">
      <svg class="w14" viewBox="0 0 14 16"><path d="M1 11l6-6 6 6" /></svg>
      <svg class="w18" viewBox="0 0 18 16"><path d="M5 5.500h11v7H6M16 8h1v2M2 2v3M5 2v3M1 5h5v2L4 9v3" /><path class="fill" d="M8 7h7v4H8z" /></svg>
      <svg class="w14" viewBox="0 0 14 16"><path d="M1 14C1 7 6 2 13 2M4 14c0-5 4-9 9-9M7 14c0-3 3-6 6-6" /><path class="fill" d="M10 14c0-2 1-3 3-3v3z" /></svg>
      <svg class="w18" viewBox="0 0 18 16"><path d="M1 6h3l4-4v12l-4-4H1zM10 6c1 1 1 3 0 4M12 4c2 2 2 6 0 8M14 2c3 3 3 9 0 12" /></svg>
      <svg class="w24" viewBox="0 0 24 16"><path d="M1 2.500h22v11H1z" /><path d="M3 5.500h18M3 8h18M6 11h12" stroke-dasharray="2 1" /></svg>
      <b>中</b>
      <span class="sogou">S</span>
    </div>
    <div class="clock"><span>21:21</span><span>2017/11/13</span></div>
    <button class="notice" aria-label="通知"><svg viewBox="0 0 16 16"><path d="M0 1h16v12h-5l-3 3v-3H0z" /><path class="ink" d="M3 4.500h10M3 7.500h10M3 10.500h6" /></svg><span>20</span></button>
  </div>
</div>

<style>
  :global(body) {
    margin: 0;
    background: #f0f0f0;
  }

  .app {
    --ui: 'Open Sans', 'Noto Sans CJK SC', sans-serif;
    --line: #a0a0a0;
    display: flex;
    flex-direction: column;
    min-height: 100vh;
    overflow: hidden;
    background: #f0f0f0;
    color: #000;
    font: 12px/16px var(--ui);
    white-space: nowrap;
  }

  button, input, select { font: inherit; color: inherit; }
  button { margin: 0; padding: 0; border: 0; background: none; white-space: nowrap; }
  h1, h2 { margin: 0; font: inherit; }
  ul { list-style: none; margin: 0; padding: 0; }

  .icon { width: 16px; height: 16px; flex: none; display: block; }
  .half { font: 10px/16px 'DejaVu Sans Mono', monospace; white-space: pre; }

  /* title */
  .titlebar { position: relative; display: flex; align-items: center; gap: 5px; height: 23px; padding-left: 2px; background: #fff; }
  .titlebar h1 { font-size: 13px; line-height: 23px; }
  .window { margin-left: auto; display: flex; gap: 34px; padding: 0 19px; }
  .window svg { display: block; width: 12px; height: 12px; fill: none; stroke: #000; }
  .speed {
    position: absolute; left: 492px; top: -26px; width: 45px; height: 45px; padding-top: 25px; box-sizing: border-box;
    border-radius: 50%; background: #3fbf62; border: 1px solid #37894b; box-shadow: 0 1px 3px #666;
    color: #fff; font-weight: 700; text-align: center;
  }

  /* bars */
  .menubar, .toprow, .row { display: flex; align-items: center; }
  .menubar { height: 30px; gap: 2px; }
  .menus { display: flex; align-items: center; flex: none; width: 935px; padding-left: 2px; box-sizing: border-box; }
  .menulist { display: flex; justify-content: space-between; width: 783px; }
  .menu { padding: 0 5px; }
  .band {
    display: flex; align-items: center; height: 27px; box-sizing: border-box;
    background: linear-gradient(#fdfdfd, #f1f1f1); border-radius: 3px;
  }
  .hint { flex: 0 0 187px; justify-content: center; }
  .hint a { color: #00686b; text-decoration: none; }
  .account, .rest { flex: 1; }
  .account { padding-left: 2px; }
  .toprow { height: 31px; gap: 2px; }
  .file { width: 151px; padding-left: 2px; }
  .main { width: 547px; padding-left: 1px; }
  .more { margin-left: auto; padding: 0 4px; height: 14px; font-size: 14px; line-height: 12px; font-weight: 700; align-self: flex-start; }

  .tool { display: flex; align-items: center; gap: 4px; height: 25px; padding: 0 4px 0 3px; flex: none; }
  .tool:disabled { color: #838383; }
  .tool.on { padding: 0 3px; border: 1px solid #0078d7; background: #dfebf6; height: 24px; }
  .tool.view { background: #fff; }
  .caret { width: 0; height: 0; border: 3px solid transparent; border-top-color: currentColor; border-bottom: 0; }
  .caret.wide { margin-left: 2px; }
  .caret.tight { margin-left: -1px; }
  .caret.flip { transform: rotate(180deg); }
  .sep { width: 1px; height: 16px; margin: 0 3px 0 2px; background: #b8b8b8; flex: none; }
  .grip {
    width: 2px; height: 16px; margin: 0 3px 0 4px; flex: none;
    background: repeating-linear-gradient(#b0b0b0 0 2px, transparent 2px 5px);
  }
  .combo { position: relative; width: 70px; height: 23px; margin-right: 2px; background: #fff; flex: none; }
  .combo.short { width: 58px; }
  .combo select { width: 100%; height: 100%; padding: 0 14px 0 2px; border: 0; appearance: none; background: transparent; outline: 0; }
  .combo::after {
    content: ''; position: absolute; right: 3px; top: 10px;
    border: 3px solid transparent; border-top-color: #000; border-bottom: 0; pointer-events: none;
  }

  .work { display: flex; flex: 1; min-height: 0; }

  /* sidebar */
  .side { display: flex; flex-direction: column; flex: 0 0 176px; padding: 0 0 2px 1px; margin-right: 3px; }
  .side-title { display: flex; align-items: center; height: 15px; margin-bottom: 2px; background: #0054e3; color: #fff; }
  .side-title h2 { flex: 1; font-size: 13px; line-height: 15px; }
  .side-title button { margin-right: 7px; }
  .side-title button:last-child { margin: 0 5px 0 2px; }
  .side-title svg { display: block; width: 9px; height: 9px; fill: none; stroke: #fff; }
  .tab {
    height: 22px; flex: none; box-sizing: border-box; margin-right: 1px; background: #f0f0f0;
    border: 1px solid #fff; border-right-color: #9a9a9a; border-bottom-color: #9a9a9a; border-left-color: var(--line);
  }
  .tree-tools { display: flex; align-items: center; gap: 7px; height: 26px; flex: none; margin: 1px 2px 0; padding-left: 4px; border: 1px solid var(--line); border-width: 1px 1px 0; background: linear-gradient(#fdfdfd, #ececec); }
  .tree-tools svg { display: block; width: 16px; height: 16px; fill: #008080; stroke: #012; }
  .tree-box { display: flex; flex: 1 1 0; min-height: 0; overflow: hidden; margin: 0 2px 2px; border: 1px solid #7b8594; background: #fff; }
  .tree { flex: 1; min-width: 0; overflow: hidden; }
  .group { display: flex; align-items: center; gap: 5px; height: 16px; padding-left: 6px; }
  .group .icon { margin-left: 2px; }
  .group.last { padding-left: 21px; }
  .leaves { margin-left: 11px; border-left: 1px dotted #888; padding-left: 18px; }
  .leaves li { display: flex; align-items: center; height: 16px; border-left: 1px dotted #888; }
  .leaves li::before { content: ''; width: 10px; border-top: 1px dotted #888; flex: none; }
  .leaf { display: flex; align-items: center; gap: 4px; height: 16px; padding-left: 2px; }
  .leaf.current { background: #d9d9d9; }
  .pages { width: 12px; height: 12px; flex: none; border: 1px solid #2c86d0; background: repeating-linear-gradient(90deg, #fff 0 1px, #8cc4f0 1px 5px, #fff 5px 6px); }
  .new { align-self: flex-start; background: #ffdf00; font-size: 9px; line-height: 9px; }

  .chev { width: 10px; height: 10px; flex: none; fill: none; stroke: #444; stroke-width: 2; }
  .chev.down { transform: rotate(180deg); }
  .chev.right { transform: rotate(90deg); }
  .group .chev.right { stroke: #999; }
  .chev.left { transform: rotate(-90deg); }
  .vbar { display: flex; flex-direction: column; align-items: center; width: 15px; flex: none; padding: 4px 0; background: #f0f0f0; }
  .vbar .track { display: flex; flex-direction: column; flex: 1; width: 100%; padding: 2px 0; }
  .side .track { justify-content: flex-end; }
  .side .thumb { height: 50%; background: #cdcdcd; }
  .side .vbar { margin-right: 2px; }

  /* stage */
  .stage { display: flex; flex-direction: column; flex: 1; min-width: 0; padding-right: 1px; }
  .row { height: 29px; flex: none; gap: 2px; }
  .row.edit { height: 26px; }
  .stub { width: 30px; margin-left: auto; margin-right: 247px; }
  .scene { display: block; width: 100%; flex: 1 1 200px; min-height: 0; shape-rendering: crispEdges; background: #000; }
  .ax, .outline, .orbit, .bars, .ties { fill: none; }
  .dark { stroke: #8b0000; }
  .red { stroke: #f00; }
  .green { stroke: #008400; }
  .bars { stroke: #a09089; stroke-width: 2; }
  .ties { stroke: #a09089; stroke-width: 1; }
  .outline { stroke: #fff; stroke-width: 2; }
  .orbit { stroke: #777; }
  .cad text { fill: #ddd; font: 14px Roboto, sans-serif; text-anchor: middle; }
  .tripod path { stroke-width: 4; }
  .tripod text { font: 11px 'Liberation Sans', sans-serif; text-anchor: middle; }

  .row.snap { height: 31px; }
  .snap .band { height: 29px; padding-right: 4px; }
  .snap .grip { margin-right: 2px; }
  .snap label, .unit { font-size: 13px; color: #7a7a7a; margin: 0 1px; }
  .snap label.check { display: flex; align-items: center; gap: 7px; margin-right: 5px; font-size: 12px; color: #000; }
  .check input { appearance: none; width: 12px; height: 12px; margin: 0; border: 1px solid #999; background: #f4f4f4; }
  .spin { display: flex; align-items: center; width: 58px; height: 23px; box-sizing: border-box; border: 1px solid #6c6c6c; }
  .spin.wide { width: 68px; }
  .spin input { flex: 1; width: 0; padding: 0 8px 0 0; border: 0; background: none; text-align: right; color: #858585; }
  .steps { display: flex; flex-direction: column; justify-content: space-between; height: 14px; padding-right: 4px; color: #555; }

  .panel { display: flex; flex: none; padding-right: 1px; }
  .dock {
    width: 12px; flex: none;
    background: radial-gradient(circle at 2px 2px, #b8b8b8 1px, transparent 1px) 0 0 / 5px 5px;
    background-clip: content-box; padding: 16px 1px 2px 2px; box-sizing: border-box; position: relative;
  }
  .dock button { position: absolute; left: 1px; top: 3px; width: 10px; height: 9px; background: #ddd; border: 1px solid #333; font-size: 12px; line-height: 6px; color: #700; font-weight: 700; }
  .panel-body { flex: 1; min-width: 0; }
  .rebar-tools { height: 27px; margin: 1px 0; }
  .rebar-tools .tool { padding: 0 4px; }
  .rebar-tools .sep { margin: 0 1px; }
  .total { padding-left: 8px; }
  .gridbox { display: grid; grid-template-columns: 1fr 16px; border: 1px solid #8f9299; background: #f0f0f0; padding: 0 1px 2px 0; }
  .viewport { height: 154px; overflow: hidden; }
  table { border-collapse: separate; border-spacing: 0; table-layout: fixed; width: 1235px; }
  .c0 { width: 34px; } .c1 { width: 73px; } .c2 { width: 56px; } .c3 { width: 36px; }
  .c4 { width: 33px; } .c5 { width: 201px; } .c6 { width: 166px; } .c7 { width: 156px; }
  .c8 { width: 61px; } .c9 { width: 38px; } .c10 { width: 39px; } .c11 { width: 49px; }
  .c12, .c13 { width: 61px; } .c14 { width: 71px; } .c15 { width: 100px; }
  th, td { box-sizing: border-box; padding: 0; border: solid #c0c0c0; border-width: 0 1px 1px 0; font-weight: 400; }
  thead th { height: 20px; background: linear-gradient(#fff, #efefef); }
  thead th.active { background: linear-gradient(#fbdc9c, #f3bd5e); color: #6b0050; }
  tbody th { background: #f8f8f8; }
  tbody th.active { background: #ffd28a; color: #6b0050; }
  thead th:last-child { text-align: left; padding-left: 12px; }
  td { padding-left: 2px; background: #ccffda; text-align: left; }
  td.name { border-right-color: #000; }
  td.name.active { background: #aeeade; }
  td.mid { text-align: center; }
  td.shape { padding: 0; vertical-align: top; }
  .r1 { height: 37px; } .r2 { height: 61px; } .r3 { height: 29px; } .r4 { height: 8px; }
  .shape svg { display: block; width: 200px; overflow: visible; fill: none; stroke: #000; }
  .r1 .shape svg { height: 36px; } .r2 .shape svg { height: 60px; } .r3 .shape svg { height: 28px; }
  .shape .thick { stroke-width: 2; }
  .shape text { fill: #000; stroke: none; font: 11px var(--ui); text-anchor: middle; }
  .shape .slope { fill: #3b6a55; }
  .grade { width: 10px; height: 10px; fill: none; stroke: #000; vertical-align: middle; shape-rendering: crispEdges; }
  .grid-v { width: 16px; }
  .grid-v .thumb { height: 26px; background: #cdcdcd; }
  .hbar { display: flex; align-items: center; height: 16px; grid-column: 1; padding: 0 3px; gap: 4px; }
  .hbar .track { flex: 1; }
  .hbar .thumb { width: 72%; height: 15px; background: #cdcdcd; }

  /* status */
  .status { display: flex; gap: 2px; height: 21px; flex: none; background: #fff; }
  .status span[class^='s'] { box-sizing: border-box; border: 1px solid #d4d4d4; padding: 1px 1px 0; line-height: 18px; background: #f7f7f7; }
  .s0 { width: 148px; } .s1 { width: 77px; } .s2 { width: 98px; } .s3 { width: 48px; }
  .s4 { flex: 1; } .s5 { width: 70px; }

  /* taskbar */
  .taskbar { display: flex; height: 40px; flex: none; background: #010a0e; color: #fff; }
  .start { width: 48px; background: #000; }
  .start svg { width: 16px; height: 16px; fill: #fff; display: block; margin: auto; }
  .search { display: flex; align-items: center; width: 344px; box-sizing: border-box; padding: 0 14px 0 9px; gap: 5px; background: #333; }
  .search input { flex: 1; min-width: 0; padding: 0; border: 0; outline: 0; background: none; font-size: 14px; }
  .search input::placeholder { color: #a6a6a6; opacity: 1; }
  .cortana { width: 22px; height: 22px; fill: none; stroke: #fff; stroke-width: 2.500; }
  .mic { width: 12px; height: 18px; fill: none; stroke: #aaa; }
  .apps { display: flex; gap: 2px; }
  .apps.running { gap: 1px; margin-left: 2px; }
  .apps button { display: flex; align-items: center; justify-content: center; width: 48px; }
  .apps .icon { width: 24px; height: 24px; }
  .running button { border-bottom: 2px solid #76b9ed; padding-top: 2px; background-clip: padding-box; }
  .running .active { background-color: #333e42; }
  .cpu, .clock { display: flex; flex-direction: column; justify-content: center; align-items: center; line-height: 18px; }
  .cpu { margin-left: auto; }
  .tray { display: flex; align-items: center; gap: 9px; padding: 0 14px 0 18px; }
  .tray svg { height: 16px; fill: none; stroke: #fff; }
  .tray .fill { fill: #fff; }
  .w14 { width: 14px; } .w18 { width: 18px; } .w24 { width: 24px; }
  .tray b { font-size: 13px; font-weight: 500; }
  .sogou { width: 15px; margin-left: 5px; border-radius: 3px; background: #f4511e; font: 700 14px/15px var(--ui); text-align: center; transform: rotate(-8deg); }
  .notice { position: relative; width: 58px; background: #000; }
  .notice svg { display: block; width: 16px; height: 16px; margin-left: 17px; fill: #fff; }
  .notice .ink { stroke: #000; }
  .notice span { position: absolute; left: 22px; top: 18px; padding: 0 3px; border: 1px solid #888; border-radius: 9px; background: #333; font-weight: 700; color: #fff; }
</style>
